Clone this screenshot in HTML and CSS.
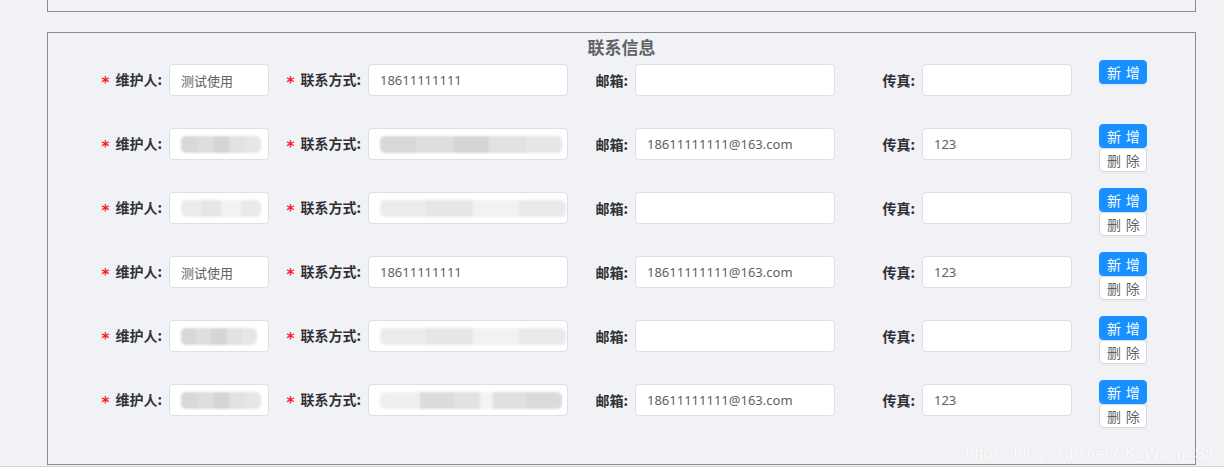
FILE: index.html
```html
<!DOCTYPE html>
<html lang="zh-CN">
<head>
<meta charset="utf-8">
<title>联系信息</title>
<link rel="stylesheet" href="styles.css">
</head>
<body>
<div class="top-box"></div>
<section class="contact-box">
  <h2 class="title">联系信息</h2>

  <div class="row">
    <div class="field f1"><label class="label"><span class="req">*</span>维护人:</label><div class="input">测试使用</div></div>
    <div class="field f2"><label class="label"><span class="req">*</span>联系方式:</label><div class="input wide">18611111111</div></div>
    <div class="field f3"><label class="label">邮箱:</label><div class="input wide"></div></div>
    <div class="field f4"><label class="label">传真:</label><div class="input mid"></div></div>
    <div class="btns"><button class="btn primary"><span>新增</span></button></div>
  </div>

  <div class="row">
    <div class="field f1"><label class="label"><span class="req">*</span>维护人:</label><div class="input"><span class="blur b-gray" style="width:80px"></span></div></div>
    <div class="field f2"><label class="label"><span class="req">*</span>联系方式:</label><div class="input wide"><span class="blur b-gray" style="width:182px"></span></div></div>
    <div class="field f3"><label class="label">邮箱:</label><div class="input wide">18611111111@163.com</div></div>
    <div class="field f4"><label class="label">传真:</label><div class="input mid">123</div></div>
    <div class="btns"><button class="btn primary"><span>新增</span></button><button class="btn"><span>删除</span></button></div>
  </div>

  <div class="row">
    <div class="field f1"><label class="label"><span class="req">*</span>维护人:</label><div class="input"><span class="blur b-light" style="width:80px"></span></div></div>
    <div class="field f2"><label class="label"><span class="req">*</span>联系方式:</label><div class="input wide"><span class="blur b-light" style="width:186px"></span></div></div>
    <div class="field f3"><label class="label">邮箱:</label><div class="input wide"></div></div>
    <div class="field f4"><label class="label">传真:</label><div class="input mid"></div></div>
    <div class="btns"><button class="btn primary"><span>新增</span></button><button class="btn"><span>删除</span></button></div>
  </div>

  <div class="row">
    <div class="field f1"><label class="label"><span class="req">*</span>维护人:</label><div class="input">测试使用</div></div>
    <div class="field f2"><label class="label"><span class="req">*</span>联系方式:</label><div class="input wide">18611111111</div></div>
    <div class="field f3"><label class="label">邮箱:</label><div class="input wide">18611111111@163.com</div></div>
    <div class="field f4"><label class="label">传真:</label><div class="input mid">123</div></div>
    <div class="btns"><button class="btn primary"><span>新增</span></button><button class="btn"><span>删除</span></button></div>
  </div>

  <div class="row">
    <div class="field f1"><label class="label"><span class="req">*</span>维护人:</label><div class="input"><span class="blur b-gray" style="width:76px"></span></div></div>
    <div class="field f2"><label class="label"><span class="req">*</span>联系方式:</label><div class="input wide"><span class="blur b-light" style="width:186px"></span></div></div>
    <div class="field f3"><label class="label">邮箱:</label><div class="input wide"></div></div>
    <div class="field f4"><label class="label">传真:</label><div class="input mid"></div></div>
    <div class="btns"><button class="btn primary"><span>新增</span></button><button class="btn"><span>删除</span></button></div>
  </div>

  <div class="row">
    <div class="field f1"><label class="label"><span class="req">*</span>维护人:</label><div class="input"><span class="blur b-gray" style="width:80px"></span></div></div>
    <div class="field f2"><label class="label"><span class="req">*</span>联系方式:</label><div class="input wide"><span class="blur b-mix" style="width:182px"></span></div></div>
    <div class="field f3"><label class="label">邮箱:</label><div class="input wide">18611111111@163.com</div></div>
    <div class="field f4"><label class="label">传真:</label><div class="input mid">123</div></div>
    <div class="btns"><button class="btn primary"><span>新增</span></button><button class="btn"><span>删除</span></button></div>
  </div>

  <div class="watermark">https://blog.csdn.net/CK_Wang_Sir</div>
</section>
<div class="page-foot"></div>
</body>
</html>
```
FILE: styles.css
```css
html, body {
  margin: 0;
  padding: 0;
}
body {
  background: #f0f2f5;
  font-family: "Noto Sans CJK SC", "Noto Sans", sans-serif;
  height: 467px;
  overflow: hidden;
}
.top-box {
  box-sizing: border-box;
  margin-left: 47px;
  width: 1149px;
  height: 12px;
  border: 1px solid #8a8a8a;
  border-top: none;
}
.contact-box {
  position: relative;
  box-sizing: border-box;
  margin: 20px 0 0 47px;
  width: 1149px;
  border: 1px solid #8a8a8a;
  padding-bottom: 20px;
}
.title {
  margin: 0;
  height: 27px;
  line-height: 27px;
  text-align: center;
  font-size: 17px;
  font-weight: bold;
  color: #606266;
}
.row {
  display: flex;
  align-items: flex-start;
  height: 64px;
}
.field {
  display: flex;
  align-items: center;
  margin-top: 4px;
  height: 32px;
}
.label {
  box-sizing: border-box;
  text-align: right;
  padding-right: 7px;
  font-size: 14px;
  font-weight: bold;
  color: #303133;
  white-space: nowrap;
}
.f1 .label { width: 121px; }
.f2 .label { width: 99px; }
.f3 .label { width: 67px; }
.f4 .label { width: 87px; }
.req {
  color: #f5222d;
  margin-right: 6px;
  font-family: "DejaVu Sans", sans-serif;
  font-weight: bold;
  font-size: 15px;
  vertical-align: -3px;
}
.input {
  box-sizing: border-box;
  width: 100px;
  height: 32px;
  background: #fff;
  border: 1px solid #dcdfe6;
  border-radius: 4px;
  padding: 0 11px;
  display: flex;
  align-items: center;
  font-family: "Noto Sans", "Noto Sans CJK SC", sans-serif;
  font-size: 13px;
  color: #606266;
  white-space: nowrap;
  overflow: hidden;
}
.input.wide { width: 200px; }
.input.mid { width: 150px; }
.blur {
  display: block;
  height: 17px;
  border-radius: 5px;
  filter: blur(1px);
  flex: none;
}
.b-gray {
  background: linear-gradient(90deg, #d8d8d8 0%, #d8d8d8 20%, #dedede 20%, #dedede 40%, #d5d5d5 40%, #d5d5d5 60%, #e2e2e2 60%, #e2e2e2 80%, #e6e6e6 80%);
}
.b-light {
  background: linear-gradient(90deg, #ececec 0%, #ececec 25%, #e6e6e6 25%, #e6e6e6 50%, #f2f2f2 50%, #f2f2f2 75%, #eaeaea 75%);
}
.b-mix {
  background: linear-gradient(90deg, #efefef 0%, #efefef 22%, #dcdcdc 22%, #dcdcdc 40%, #e2e2e2 40%, #e2e2e2 55%, #f3f3f3 55%, #f3f3f3 62%, #e0e0e0 62%, #e0e0e0 80%, #dadada 80%);
}
.btns {
  margin-left: 27px;
  display: flex;
  flex-direction: column;
  width: 48px;
}
.btn {
  box-sizing: border-box;
  width: 48px;
  height: 24px;
  padding: 0 7px;
  border: 1px solid #d9d9d9;
  border-radius: 4px;
  background: #fff;
  color: rgba(0, 0, 0, 0.65);
  font-family: "Noto Sans CJK SC", sans-serif;
  font-size: 14px;
  line-height: 22px;
  box-shadow: 0 2px 0 rgba(0, 0, 0, 0.015);
  cursor: pointer;
  white-space: nowrap;
}
.btn span {
  letter-spacing: 0.34em;
  margin-right: -0.34em;
}
.btn.primary {
  background: #1890ff;
  border-color: #1890ff;
  color: #fff;
  box-shadow: 0 2px 0 rgba(0, 0, 0, 0.045);
}
.watermark {
  position: absolute;
  right: -19px;
  bottom: 1px;
  font-family: "Liberation Sans", Arial, sans-serif;
  font-size: 16px;
  color: rgba(255, 255, 255, 0.95);
  text-shadow: 0 0 1px rgba(160, 160, 160, 0.25);
  white-space: nowrap;
}
.page-foot {
  margin-top: 1px;
  border-top: 1px solid #d4d4d4;
}
```
